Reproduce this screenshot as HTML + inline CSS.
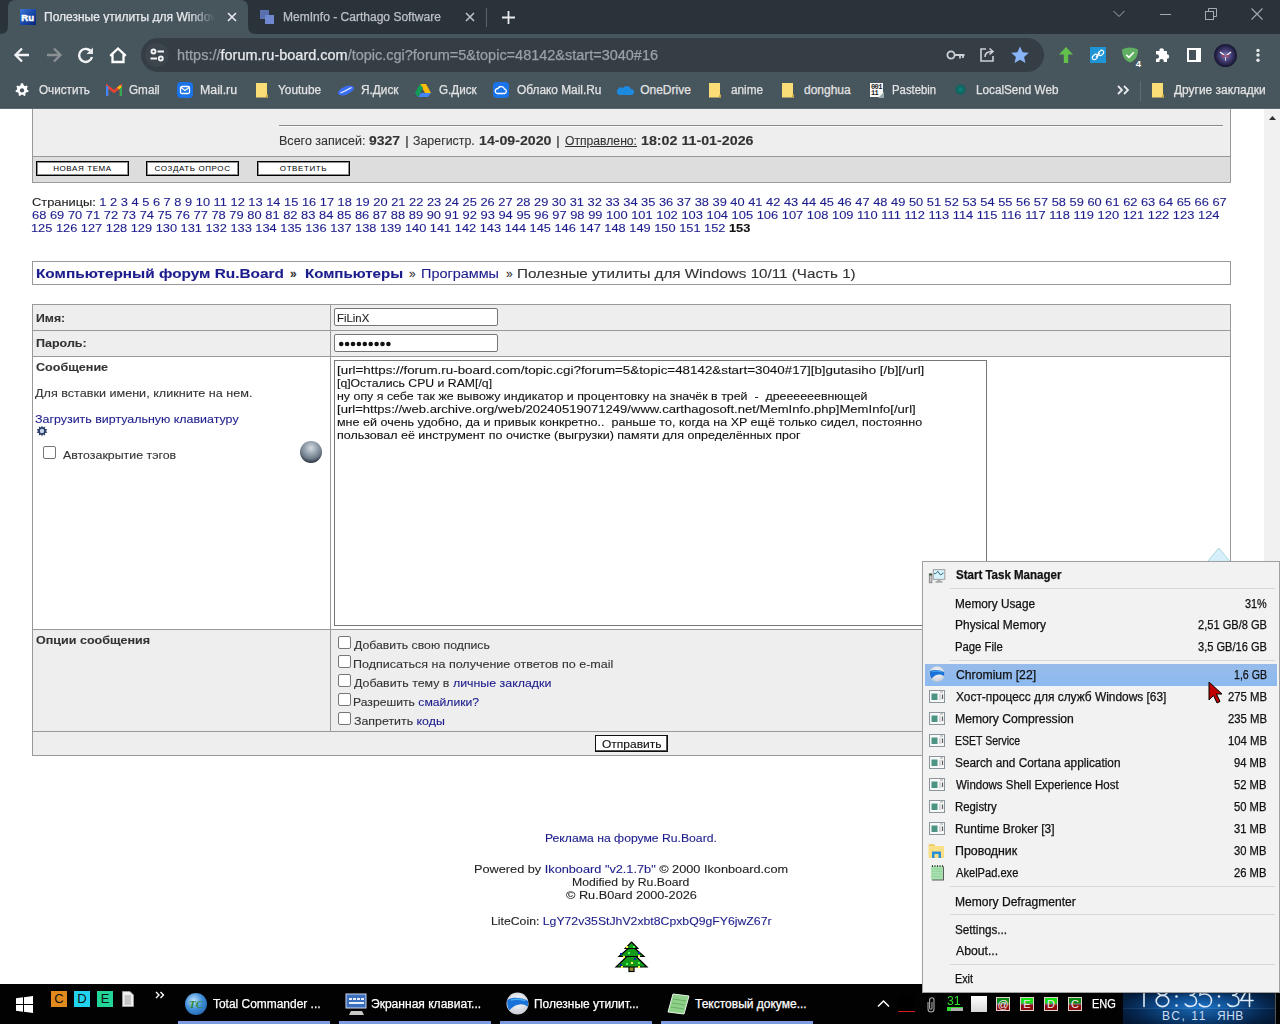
<!DOCTYPE html>
<html><head><meta charset="utf-8"><style>
*{margin:0;padding:0;box-sizing:content-box}
html,body{width:1280px;height:1024px;overflow:hidden;background:#fff;position:relative}
body{font-family:"Liberation Sans",sans-serif}
.abs{position:absolute}
.t{position:absolute;white-space:nowrap;line-height:1;transform-origin:0 0;font-family:"Liberation Sans",sans-serif}
.t a{color:#1c1c8c;text-decoration:none}
.t b{font-weight:bold}
.btn{position:absolute;top:161px;width:93px;height:15px;box-sizing:border-box;border:1px solid #000;box-shadow:inset 0 0 0 1px rgba(0,0,0,.45);background:#fff;font:8px/13px "Liberation Sans",sans-serif;letter-spacing:0.6px;text-align:center;color:#000}
.cb{position:absolute;width:11px;height:11px;border:1px solid #767676;border-radius:2px;background:#fff}
.qi{position:absolute;top:991px;width:16px;height:16px;font:13px/16px "Liberation Sans",sans-serif;text-align:center}
.tr{position:absolute;top:997px;width:14px;height:14px;background:linear-gradient(var(--g,#14e014) 0,var(--g,#14e014) 40%,#7a7a7a 50%,#8a0c0c 60%,#8a0c0c 100%);color:#f4eaea;font:11px/14px "Liberation Sans",sans-serif;text-align:center;outline:1px solid #e8d0d0;outline-offset:-1px}
.ct{-webkit-text-stroke:0.25px currentColor}
.pt{-webkit-text-stroke:0.1px currentColor}
.sep{position:absolute;left:950px;width:325px;height:1px;background:#d7d7d7}
</style></head><body>
<!-- ============ PAGE ============ -->
<div class="abs" style="left:0;top:108px;width:1280px;height:876px;background:#fff"></div>
<!-- scrollbar -->
<div class="abs" style="left:1264px;top:108px;width:16px;height:876px;background:#f1f1f1"></div>
<svg class="abs" style="left:1268px;top:115px" width="9" height="6"><path d="M1 5L4.5 1L8 5Z" fill="#303030"/></svg>
<!-- header table -->
<div class="abs" style="left:32px;top:100px;width:1197px;height:81px;border:1px solid #999;background:#eeeeee"></div>
<div class="abs" style="left:33px;top:156px;width:1197px;height:1px;background:#999"></div>
<div class="abs" style="left:33px;top:157px;width:1197px;height:25px;background:#dddddd"></div>
<div class="abs" style="left:279px;top:125px;width:944px;height:1px;background:#8a8a8a"></div>
<div class="abs" style="left:279px;top:126px;width:944px;height:1px;background:#fafafa"></div>
<div class="btn" style="left:36px">НОВАЯ ТЕМА</div>
<div class="btn" style="left:146px">СОЗДАТЬ ОПРОС</div>
<div class="btn" style="left:257px">ОТВЕТИТЬ</div>
<!-- breadcrumb box -->
<div class="abs" style="left:32px;top:261px;width:1197px;height:22px;border:1px solid #999;background:#fff"></div>
<!-- form table -->
<div class="abs" style="left:32px;top:304px;width:1197px;height:450px;border:1px solid #999;background:#eeeeee"></div>
<div class="abs" style="left:33px;top:330px;width:1197px;height:1px;background:#999"></div>
<div class="abs" style="left:33px;top:356px;width:1197px;height:1px;background:#999"></div>
<div class="abs" style="left:33px;top:357px;width:1197px;height:272px;background:#fff"></div>
<div class="abs" style="left:33px;top:629px;width:1197px;height:1px;background:#999"></div>
<div class="abs" style="left:33px;top:731px;width:1197px;height:1px;background:#999"></div>
<div class="abs" style="left:330px;top:305px;width:1px;height:426px;background:#999"></div>
<!-- inputs -->
<div class="abs" style="left:334px;top:308px;width:162px;height:16px;border:1px solid #767676;border-radius:2px;background:#fff"></div>
<div class="abs" style="left:334px;top:334px;width:162px;height:16px;border:1px solid #767676;border-radius:2px;background:#fff"></div>
<svg class="abs" style="left:338px;top:341px" width="56" height="6"><g fill="#111"><circle cx="3.2" cy="3" r="2.3"/><circle cx="9.1" cy="3" r="2.3"/><circle cx="15.0" cy="3" r="2.3"/><circle cx="20.9" cy="3" r="2.3"/><circle cx="26.8" cy="3" r="2.3"/><circle cx="32.7" cy="3" r="2.3"/><circle cx="38.6" cy="3" r="2.3"/><circle cx="44.5" cy="3" r="2.3"/><circle cx="50.4" cy="3" r="2.3"/></g></svg>
<!-- textarea -->
<div class="abs" style="left:334px;top:360px;width:651px;height:264px;border:1px solid #767676;background:#fff"></div>
<!-- gear + checkbox + knob -->
<svg class="abs" style="left:36px;top:425px" width="12" height="12"><path d="M6 0.5L7 2.5L9.2 1.5L9 3.9L11.4 4.2L10 6L11.4 7.8L9 8.1L9.2 10.5L7 9.5L6 11.5L5 9.5L2.8 10.5L3 8.1L0.6 7.8L2 6L0.6 4.2L3 3.9L2.8 1.5L5 2.5Z" fill="#2a3d66"/><circle cx="6" cy="6" r="2.2" fill="#c8d4ea"/></svg>
<div class="cb" style="left:43px;top:446px"></div>
<div class="abs" style="left:300px;top:441px;width:22px;height:22px;border-radius:50%;background:radial-gradient(circle at 50% 32%,#d4dae0 0,#9aa6b2 32%,#6e7b88 58%,#2e3a46 78%,#2e3a46 88%,#9aa2aa 100%)"></div>
<!-- option checkboxes -->
<div class="cb" style="left:338px;top:636px"></div>
<div class="cb" style="left:338px;top:655px"></div>
<div class="cb" style="left:338px;top:674px"></div>
<div class="cb" style="left:338px;top:693px"></div>
<div class="cb" style="left:338px;top:712px"></div>
<!-- submit button -->
<div class="abs" style="left:595px;top:735px;width:71px;height:15px;border:1px solid #111;background:#fff;box-shadow:inset -1px -1px 0 #555"></div>
<!-- tree -->
<svg class="abs" style="left:610px;top:938px" width="42" height="38" viewBox="610 938 42 38"><g stroke="#000" stroke-width="1.2" stroke-linejoin="miter">
<rect x="629" y="966" width="5" height="5.5" fill="#9a8a30"/>
<path d="M631.5 952L647 967H616Z" fill="#139a1a"/>
<path d="M631.5 945.5L644 956.5H619Z" fill="#139a1a"/>
<path d="M631.5 942L637.8 948.5H625.2Z" fill="#139a1a"/></g>
<g fill="#ffff50"><rect x="626" y="946" width="2" height="2"/><rect x="623" y="956" width="2" height="2"/><rect x="638" y="955" width="2" height="2"/><rect x="631" y="962" width="2" height="2"/><rect x="621" y="966" width="2" height="2"/><rect x="638" y="966" width="2" height="2"/></g>
<g fill="#1020b0"><rect x="620" y="953" width="2" height="2"/><rect x="638" y="952" width="2" height="2"/><rect x="634" y="958" width="2" height="2"/><rect x="620" y="964" width="2" height="2"/></g>
<g fill="#50ff50"><rect x="633" y="946" width="2" height="2"/><rect x="628" y="952" width="2" height="2"/><rect x="626" y="963" width="2" height="2"/><rect x="638" y="962" width="2" height="2"/></g>
</svg>
<div id="hdr0" class="t pt" style="left:278.96px;top:134.84px;font-size:12px;color:#333;transform:scaleX(1.0444);">Всего записей:</div>
<div id="hdr1" class="t pt" style="left:369.34px;top:134.84px;font-size:12px;color:#333;transform:scaleX(1.1654);"><b>9327</b></div>
<div id="hdr2" class="t pt" style="left:404.75px;top:134.84px;font-size:12px;color:#333;transform:scaleX(1.2500);">|</div>
<div id="hdr3" class="t pt" style="left:412.77px;top:134.84px;font-size:12px;color:#333;transform:scaleX(1.0322);">Зарегистр.</div>
<div id="hdr4" class="t pt" style="left:478.68px;top:134.84px;font-size:12px;color:#333;transform:scaleX(1.1803);"><b>14-09-2020</b></div>
<div id="hdr5" class="t pt" style="left:555.75px;top:134.84px;font-size:12px;color:#333;transform:scaleX(1.2500);">|</div>
<div id="hdr6" class="t pt" style="left:565.01px;top:134.84px;font-size:12px;color:#333;transform:scaleX(1.0125);"><u>Отправлено:</u></div>
<div id="hdr7" class="t pt" style="left:641.24px;top:134.84px;font-size:12px;color:#333;transform:scaleX(1.1872);"><b>18:02 11-01-2026</b></div>
<div id="pg1" class="t pt" style="left:32.00px;top:196.69px;font-size:11px;color:#222;transform:scaleX(1.1659);">Страницы: <a>1</a> <a>2</a> <a>3</a> <a>4</a> <a>5</a> <a>6</a> <a>7</a> <a>8</a> <a>9</a> <a>10</a> <a>11</a> <a>12</a> <a>13</a> <a>14</a> <a>15</a> <a>16</a> <a>17</a> <a>18</a> <a>19</a> <a>20</a> <a>21</a> <a>22</a> <a>23</a> <a>24</a> <a>25</a> <a>26</a> <a>27</a> <a>28</a> <a>29</a> <a>30</a> <a>31</a> <a>32</a> <a>33</a> <a>34</a> <a>35</a> <a>36</a> <a>37</a> <a>38</a> <a>39</a> <a>40</a> <a>41</a> <a>42</a> <a>43</a> <a>44</a> <a>45</a> <a>46</a> <a>47</a> <a>48</a> <a>49</a> <a>50</a> <a>51</a> <a>52</a> <a>53</a> <a>54</a> <a>55</a> <a>56</a> <a>57</a> <a>58</a> <a>59</a> <a>60</a> <a>61</a> <a>62</a> <a>63</a> <a>64</a> <a>65</a> <a>66</a> <a>67</a></div>
<div id="pg2" class="t pt" style="left:32.00px;top:209.69px;font-size:11px;color:#1c1c8c;transform:scaleX(1.1716);"><a>68</a> <a>69</a> <a>70</a> <a>71</a> <a>72</a> <a>73</a> <a>74</a> <a>75</a> <a>76</a> <a>77</a> <a>78</a> <a>79</a> <a>80</a> <a>81</a> <a>82</a> <a>83</a> <a>84</a> <a>85</a> <a>86</a> <a>87</a> <a>88</a> <a>89</a> <a>90</a> <a>91</a> <a>92</a> <a>93</a> <a>94</a> <a>95</a> <a>96</a> <a>97</a> <a>98</a> <a>99</a> <a>100</a> <a>101</a> <a>102</a> <a>103</a> <a>104</a> <a>105</a> <a>106</a> <a>107</a> <a>108</a> <a>109</a> <a>110</a> <a>111</a> <a>112</a> <a>113</a> <a>114</a> <a>115</a> <a>116</a> <a>117</a> <a>118</a> <a>119</a> <a>120</a> <a>121</a> <a>122</a> <a>123</a> <a>124</a></div>
<div id="pg3" class="t pt" style="left:30.84px;top:222.69px;font-size:11px;color:#1c1c8c;transform:scaleX(1.1637);"><a>125</a> <a>126</a> <a>127</a> <a>128</a> <a>129</a> <a>130</a> <a>131</a> <a>132</a> <a>133</a> <a>134</a> <a>135</a> <a>136</a> <a>137</a> <a>138</a> <a>139</a> <a>140</a> <a>141</a> <a>142</a> <a>143</a> <a>144</a> <a>145</a> <a>146</a> <a>147</a> <a>148</a> <a>149</a> <a>150</a> <a>151</a> <a>152</a> <b style="color:#111">153</b></div>
<div id="bc1" class="t pt" style="left:36.00px;top:267.84px;font-size:12px;color:#1c1c8c;transform:scaleX(1.2798);"><b>Компьютерный форум Ru.Board</b></div>
<div id="bc2" class="t pt" style="left:290.00px;top:267.84px;font-size:12px;color:#333;"><b>»</b></div>
<div id="bc3" class="t pt" style="left:305.00px;top:267.84px;font-size:12px;color:#1c1c8c;transform:scaleX(1.2564);"><b>Компьютеры</b></div>
<div id="bc4" class="t pt" style="left:409.00px;top:267.84px;font-size:12px;color:#333;">»</div>
<div id="bc5" class="t pt" style="left:420.80px;top:267.84px;font-size:12px;color:#1c1c8c;transform:scaleX(1.2031);">Программы</div>
<div id="bc6" class="t pt" style="left:506.00px;top:267.84px;font-size:12px;color:#333;">»</div>
<div id="bc7" class="t pt" style="left:516.73px;top:267.84px;font-size:12px;color:#333;transform:scaleX(1.2669);">Полезные утилиты для Windows 10/11 (Часть 1)</div>
<div id="l_name" class="t pt" style="left:36.00px;top:312.69px;font-size:11px;color:#333;transform:scaleX(1.1154);"><b>Имя:</b></div>
<div id="l_pass" class="t pt" style="left:36.00px;top:338.19px;font-size:11px;color:#333;transform:scaleX(1.1364);"><b>Пароль:</b></div>
<div id="l_msg" class="t pt" style="left:36.00px;top:361.69px;font-size:11px;color:#333;transform:scaleX(1.1429);"><b>Сообщение</b></div>
<div id="l_ins" class="t pt" style="left:35.00px;top:388.19px;font-size:11px;color:#333;transform:scaleX(1.1455);">Для вставки имени, кликните на нем.</div>
<div id="l_kb" class="t pt" style="left:35.00px;top:414.19px;font-size:11px;color:#1c1c8c;transform:scaleX(1.1298);">Загрузить виртуальную клавиатуру</div>
<div id="l_auto" class="t pt" style="left:63.00px;top:450.19px;font-size:11px;color:#333;transform:scaleX(1.1250);">Автозакрытие тэгов</div>
<div id="l_opt" class="t pt" style="left:36.00px;top:635.19px;font-size:11px;color:#333;transform:scaleX(1.1400);"><b>Опции сообщения</b></div>
<div id="in_name" class="t pt" style="left:336.97px;top:312.69px;font-size:11px;color:#222;transform:scaleX(1.0333);">FiLinX</div>
<div id="ta0" class="t pt" style="left:336.89px;top:364.69px;font-size:11px;color:#111;transform:scaleX(1.2143);">[url=https://forum.ru-board.com/topic.cgi?forum=5&amp;topic=48142&amp;start=3040#17][b]gutasiho [/b][/url]</div>
<div id="ta1" class="t pt" style="left:336.94px;top:377.69px;font-size:11px;color:#111;transform:scaleX(1.1123);">[q]Остались CPU и RAM[/q]</div>
<div id="ta2" class="t pt" style="left:336.94px;top:390.69px;font-size:11px;color:#111;transform:scaleX(1.1266);">ну опу я себе так же вывожу индикатор и процентовку на значёк в трей &nbsp;- &nbsp;дреееееевнющей</div>
<div id="ta3" class="t pt" style="left:336.91px;top:403.69px;font-size:11px;color:#111;transform:scaleX(1.1883);">[url=https://web.archive.org/web/20240519071249/www.carthagosoft.net/MemInfo.php]MemInfo[/url]</div>
<div id="ta4" class="t pt" style="left:336.93px;top:416.69px;font-size:11px;color:#111;transform:scaleX(1.1394);">мне ей очень удобно, да и привык конкретно.. &nbsp;раньше то, когда на XP ещё только сидел, постоянно</div>
<div id="ta5" class="t pt" style="left:336.93px;top:429.69px;font-size:11px;color:#111;transform:scaleX(1.1360);">пользовал её инструмент по очистке (выгрузки) памяти для определённых прог</div>
<div id="op0" class="t pt" style="left:354.00px;top:640.19px;font-size:11px;color:#333;transform:scaleX(1.1148);">Добавить свою подпись</div>
<div id="op1" class="t pt" style="left:352.86px;top:659.19px;font-size:11px;color:#333;transform:scaleX(1.1388);">Подписаться на получение ответов по e-mail</div>
<div id="op2" class="t pt" style="left:354.00px;top:678.19px;font-size:11px;color:#333;transform:scaleX(1.1257);">Добавить тему в <a>личные закладки</a></div>
<div id="op3" class="t pt" style="left:352.89px;top:697.19px;font-size:11px;color:#333;transform:scaleX(1.1062);">Разрешить <a>смайлики?</a></div>
<div id="op4" class="t pt" style="left:354.00px;top:716.19px;font-size:11px;color:#333;transform:scaleX(1.1250);">Запретить <a>коды</a></div>
<div id="submit" class="t pt" style="left:602.00px;top:738.69px;font-size:11px;color:#111;transform:scaleX(1.0926);">Отправить</div>
<div id="f1" class="t pt" style="left:544.89px;top:833.19px;font-size:11px;color:#1c1c8c;transform:scaleX(1.1071);"><a>Реклама на форуме Ru.Board.</a></div>
<div id="f2" class="t pt" style="left:473.92px;top:863.69px;font-size:11px;color:#222;transform:scaleX(1.1568);">Powered by <a>Ikonboard "v2.1.7b"</a> © 2000 Ikonboard.com</div>
<div id="f3" class="t pt" style="left:571.89px;top:876.69px;font-size:11px;color:#222;transform:scaleX(1.1095);">Modified by Ru.Board</div>
<div id="f4" class="t pt" style="left:566.00px;top:889.69px;font-size:11px;color:#222;transform:scaleX(1.1549);">© Ru.B0ard 2000-2026</div>
<div id="f5" class="t pt" style="left:490.89px;top:915.69px;font-size:11px;color:#222;transform:scaleX(1.1135);">LiteCoin: <a>LgY72v35StJhV2xbt8CpxbQ9gFY6jwZ67r</a></div><!-- ============ BROWSER CHROME ============ -->
<div class="abs" style="left:0;top:0;width:1280px;height:34px;background:#2a3339"></div>
<svg class="abs" style="left:0;top:0" width="260" height="34" viewBox="0 0 260 34">
  <path d="M0 34 Q8 34 8 26 L8 8 Q8 0 16 0 L240 0 Q248 0 248 8 L248 26 Q248 34 256 34 Z" fill="#47555d"/>
</svg>
<div class="abs" style="left:0;top:34px;width:1280px;height:74px;background:#47555d"></div>
<!-- tab1 favicon -->
<div class="abs" style="left:20px;top:9px;width:16px;height:16px;background:linear-gradient(135deg,#3a78d8 0,#1c4fb0 45%,#06237a 100%);"></div>
<svg class="abs" style="left:20px;top:9px" width="16" height="16"><text x="1.2" y="12.2" font-family="Liberation Sans" font-weight="bold" font-size="9.5" fill="#fff" stroke="#fff" stroke-width="0.5" letter-spacing="0.2">Ru</text></svg>
<svg class="abs" style="left:226px;top:11px" width="12" height="12"><path d="M2 2L10 10M10 2L2 10" stroke="#e8eaed" stroke-width="1.6"/></svg>
<!-- tab2 -->
<svg class="abs" style="left:259px;top:9px" width="16" height="16"><rect x="1" y="1" width="9" height="9" fill="#5a6fb0"/><rect x="6" y="6" width="9" height="9" fill="#7088d0"/></svg>
<svg class="abs" style="left:464px;top:11px" width="12" height="12"><path d="M2 2L10 10M10 2L2 10" stroke="#bdc1c6" stroke-width="1.6"/></svg>
<div class="abs" style="left:486px;top:8px;width:1px;height:19px;background:#5f6368"></div>
<svg class="abs" style="left:501px;top:10px" width="15" height="15"><path d="M7.5 1V14M1 7.5H14" stroke="#e8eaed" stroke-width="1.8"/></svg>
<!-- window controls -->
<svg class="abs" style="left:1113px;top:10px" width="12" height="8"><path d="M0.5 1L6 6.5L11.5 1" stroke="#a6abaf" stroke-width="1" fill="none"/></svg>
<div class="abs" style="left:1160px;top:14px;width:11px;height:1px;background:#a6abaf"></div>
<svg class="abs" style="left:1205px;top:8px" width="12" height="12"><path d="M3.5 3V0.5H11.5V8.5H9" stroke="#a6abaf" fill="none" stroke-width="1"/><rect x="0.5" y="3.5" width="8" height="8" stroke="#a6abaf" fill="none" stroke-width="1"/></svg>
<svg class="abs" style="left:1251px;top:8px" width="12" height="12"><path d="M0.5 0.5L11.5 11.5M11.5 0.5L0.5 11.5" stroke="#a6abaf" stroke-width="1.1"/></svg>
<!-- toolbar icons -->
<svg class="abs" style="left:13px;top:46px" width="18" height="18"><path d="M16 9H3M9 2.5L2.5 9L9 15.5" stroke="#f1f3f4" stroke-width="2.3" fill="none"/></svg>
<svg class="abs" style="left:45px;top:46px" width="18" height="18"><path d="M2 9H15M9 2.5L15.5 9L9 15.5" stroke="#8a9094" stroke-width="2.3" fill="none"/></svg>
<svg class="abs" style="left:77px;top:46px" width="18" height="18"><path d="M14.5 6.5A6.5 6.5 0 1 0 15 11" stroke="#f1f3f4" stroke-width="2.4" fill="none"/><path d="M16 1.5V8H9.5Z" fill="#e8eaed"/></svg>
<svg class="abs" style="left:109px;top:46px" width="18" height="18"><path d="M3.5 8.5V16H14.5V8.5M1.2 9.8L9 2.5L16.8 9.8" stroke="#fff" stroke-width="2.3" fill="none"/></svg>
<!-- omnibox -->
<div class="abs" style="left:141px;top:38px;width:903px;height:34px;border-radius:17px;background:#343e44"></div>
<div class="abs" style="left:145px;top:43px;width:24px;height:24px;border-radius:12px;background:#3b454b"></div>
<svg class="abs" style="left:149px;top:47px" width="16" height="16"><circle cx="4.5" cy="4.5" r="2" stroke="#f1f3f4" stroke-width="1.9" fill="none"/><path d="M8.5 4.5H15M1.5 11.5H8" stroke="#f1f3f4" stroke-width="1.9"/><circle cx="11.8" cy="11.5" r="2" stroke="#f1f3f4" stroke-width="1.9" fill="none"/></svg>
<svg class="abs" style="left:946px;top:48px" width="20" height="14"><circle cx="5" cy="7" r="3.6" stroke="#cdd1d5" stroke-width="1.8" fill="none"/><path d="M8.6 7H18.5M14 7V10.5M17 7V10" stroke="#cdd1d5" stroke-width="1.8"/></svg>
<svg class="abs" style="left:978px;top:46px" width="18" height="18"><path d="M8 3H3V15H15V10" stroke="#cdd1d5" stroke-width="1.6" fill="none"/><path d="M7 11C7 7 10 5.5 14 5.5M11.5 2.5L15 5.5L11.5 8.5" stroke="#cdd1d5" stroke-width="1.6" fill="none"/></svg>
<svg class="abs" style="left:1010px;top:45px" width="20" height="20"><path d="M10 1.5L12.6 7.3L18.8 7.8L14.1 11.9L15.5 18L10 14.8L4.5 18L5.9 11.9L1.2 7.8L7.4 7.3Z" fill="#8ab4f8"/></svg>
<!-- extensions -->
<svg class="abs" style="left:1058px;top:46px" width="16" height="18"><path d="M8 1L15 8.5H10.2V17H5.8V8.5H1Z" fill="#63c04a"/></svg>
<div class="abs" style="left:1090px;top:47px;width:16px;height:16px;background:#1e95d6"></div>
<svg class="abs" style="left:1090px;top:47px" width="16" height="16"><path d="M6 10L10 6" stroke="#fff" stroke-width="1.3"/><rect x="2" y="8" width="6" height="4" rx="2" transform="rotate(-45 5 10)" stroke="#fff" fill="none" stroke-width="1.2"/><rect x="8" y="4" width="6" height="4" rx="2" transform="rotate(-45 11 6)" stroke="#fff" fill="none" stroke-width="1.2"/></svg>
<svg class="abs" style="left:1122px;top:47px" width="22" height="21"><path d="M8 0.5C11 0.5 13.5 1.3 16 2.5C16 8 14.5 13 8 15.5C1.5 13 0 8 0 2.5C2.5 1.3 5 0.5 8 0.5Z" fill="#5fae62"/><path d="M4.2 7.8L7 10.3L11.8 5.2" stroke="#fff" stroke-width="1.6" fill="none"/><text x="16.5" y="19.5" font-family="Liberation Sans" font-size="9.5" font-weight="bold" fill="#fff" text-anchor="middle">4</text></svg>
<svg class="abs" style="left:1154px;top:47px" width="16" height="16"><path d="M2 4H5.5A2.2 2.2 0 1 1 9.8 4H13V7.3A2.2 2.2 0 1 1 13 11.7V15H9.6A2.2 2.2 0 1 0 5.6 15H2V11.5A2.2 2.2 0 1 0 2 7.5Z" fill="#fff"/></svg>
<svg class="abs" style="left:1185px;top:46px" width="18" height="18"><rect x="2" y="2" width="14" height="14" fill="#fff"/><rect x="4" y="4" width="7" height="10" fill="#455158"/></svg>
<div class="abs" style="left:1214px;top:44px;width:23px;height:23px;border-radius:50%;background:radial-gradient(circle at 50% 50%,#8a7fb8 0,#4b4680 30%,#1c1a3a 65%,#07070f 90%)"></div><svg class="abs" style="left:1214px;top:44px" width="23" height="23"><path d="M6 8L10 11M17 8L13 11" stroke="#f0f0f0" stroke-width="1.5"/><circle cx="9.5" cy="12" r="1" fill="#d03030"/><circle cx="13.5" cy="12" r="1" fill="#d03030"/><path d="M11.5 13V17" stroke="#ccc" stroke-width="1"/></svg>
<svg class="abs" style="left:1254px;top:46px" width="8" height="18"><circle cx="4" cy="4.4" r="1.7" fill="#e8eaed"/><circle cx="4" cy="9" r="1.7" fill="#e8eaed"/><circle cx="4" cy="14.2" r="1.7" fill="#e8eaed"/></svg>
<!-- bookmark icons -->
<svg class="abs" style="left:15px;top:83px" width="14" height="14" viewBox="0 0 16 16"><path d="M8 0.8L9.6 1.2L10 3.2L11.8 4.2L13.7 3.4L14.8 4.7L13.9 6.5L14.3 8.5L16 9.5L15.4 11.1L13.3 11.3L12 12.9L12.2 15L10.7 15.7L9.3 14.2H7.2L5.8 15.7L4.3 15L4.4 12.9L3.2 11.4L1 11.1L0.5 9.5L2.2 8.4L2.5 6.4L1.6 4.6L2.8 3.4L4.7 4.2L6.4 3.2L6.8 1.2Z" fill="#fff" transform="translate(0,-0.5) scale(0.98)"/><circle cx="8" cy="8.5" r="2.4" fill="#455158"/></svg>
<svg class="abs" style="left:106px;top:83px" width="16" height="14"><path d="M1 13V3L8 8.5L15 3V13" stroke="#ea4335" stroke-width="2.6" fill="none"/><path d="M1 13V3" stroke="#4285f4" stroke-width="2.6"/><path d="M15 13V3" stroke="#34a853" stroke-width="2.6"/><path d="M12 5.5L15 3" stroke="#fbbc04" stroke-width="2.6"/></svg>
<div class="abs" style="left:177px;top:82px;width:16px;height:16px;border-radius:4px;background:#1a73e8"></div>
<svg class="abs" style="left:177px;top:82px" width="16" height="16"><rect x="3.5" y="4.5" width="9" height="7" rx="1.5" stroke="#fff" stroke-width="1.3" fill="none"/><path d="M4 5.5L8 8.5L12 5.5" stroke="#fff" stroke-width="1.3" fill="none"/></svg>
<svg class="abs" style="left:255px;top:82px" width="14" height="17"><path d="M1 1H12V12.5L13 13V15.5H1Z" fill="#fbdd78"/><path d="M10.5 15.5L12 12L13 13.5V15.5Z" fill="#c9a23a"/></svg>
<svg class="abs" style="left:337px;top:83px" width="18" height="14"><ellipse cx="9" cy="7.5" rx="8.5" ry="4" transform="rotate(-22 9 7.5)" fill="#3a6ef0"/><path d="M3.5 10C7 8.5 11 6.5 14.5 4.5" stroke="#e8f0ff" stroke-width="1.3" fill="none"/></svg>
<svg class="abs" style="left:415px;top:83px" width="16" height="14"><path d="M5 1H11L16 10H10Z" fill="#fbbc04"/><path d="M5 1L0 10L3 14L8 5Z" fill="#0f9d58"/><path d="M3 14H13L16 10H6Z" fill="#4285f4"/></svg>
<div class="abs" style="left:493px;top:82px;width:16px;height:16px;border-radius:4px;background:#1a73e8"></div>
<svg class="abs" style="left:493px;top:82px" width="16" height="16"><path d="M4.5 11.5H11.5A2.3 2.3 0 0 0 11.5 7A3.5 3.5 0 0 0 5 6.5A2.5 2.5 0 0 0 4.5 11.5Z" stroke="#fff" stroke-width="1.3" fill="none"/></svg>
<svg class="abs" style="left:616px;top:84px" width="18" height="12"><path d="M3 11H15A3 3 0 0 0 15 5A4.5 4.5 0 0 0 7 4A3.5 3.5 0 0 0 3 11Z" fill="#1c8adf"/></svg>
<svg class="abs" style="left:708px;top:82px" width="14" height="17"><path d="M1 1H12V12.5L13 13V15.5H1Z" fill="#fbdd78"/><path d="M10.5 15.5L12 12L13 13.5V15.5Z" fill="#c9a23a"/></svg>
<svg class="abs" style="left:781px;top:82px" width="14" height="17"><path d="M1 1H12V12.5L13 13V15.5H1Z" fill="#fbdd78"/><path d="M10.5 15.5L12 12L13 13.5V15.5Z" fill="#c9a23a"/></svg>
<div class="abs" style="left:870px;top:83px;width:13px;height:14px;background:#fafafa"></div>
<div class="abs" style="left:871px;top:83.5px;font:bold 7px/6.5px 'Liberation Mono',monospace;color:#222;letter-spacing:-0.6px">001<br>11</div>
<svg class="abs" style="left:878px;top:92px" width="6" height="6"><path d="M0 6L6 0V6Z" fill="#9aa"/></svg>
<div class="abs" style="left:955px;top:84px;width:11px;height:11px;border-radius:50%;background:radial-gradient(circle,#11847a 0,#0d6662 45%,rgba(14,90,90,0) 100%)"></div>
<svg class="abs" style="left:1117px;top:85px" width="14" height="10"><path d="M1 1L5 5L1 9M7 1L11 5L7 9" stroke="#e8eaed" stroke-width="1.8" fill="none"/></svg>
<div class="abs" style="left:1140px;top:81px;width:1px;height:20px;background:#5f6b72"></div>
<svg class="abs" style="left:1151px;top:82px" width="14" height="17"><path d="M1 1H12V12.5L13 13V15.5H1Z" fill="#fbdd78"/><path d="M10.5 15.5L12 12L13 13.5V15.5Z" fill="#c9a23a"/></svg>
<div class="abs" style="left:0;top:107px;width:1280px;height:1px;background:#45525a"></div><div class="abs" style="left:0;top:108px;width:1280px;height:1px;background:#5d6a72"></div>
<div id="tab1" class="t ct" style="left:44.00px;top:11.34px;font-size:12px;color:#e8eaed;width:171px;overflow:hidden;-webkit-mask-image:linear-gradient(90deg,#000 85%,transparent);">Полезные утилиты для Windows 10/11 (Часть 1)</div>
<div id="tab2" class="t ct" style="left:283.00px;top:11.34px;font-size:12px;color:#bdc1c6;transform:scaleX(1.0032);">MemInfo - Carthago Software</div>
<div id="url" class="t ct" style="left:177.00px;top:47.65px;font-size:14px;color:#e8eaed;transform:scaleX(1.0344);"><span style="color:#9aa0a6">https://</span>forum.ru-board.com<span style="color:#9aa0a6">/topic.cgi?forum=5&amp;topic=48142&amp;start=3040#16</span></div>
<div id="bm0" class="t ct" style="left:38.59px;top:83.84px;font-size:12px;color:#e3e3e3;transform:scaleX(0.9750);">Очистить</div>
<div id="bm1" class="t ct" style="left:129.39px;top:83.84px;font-size:12px;color:#e3e3e3;transform:scaleX(0.9774);">Gmail</div>
<div id="bm2" class="t ct" style="left:199.97px;top:83.84px;font-size:12px;color:#e3e3e3;transform:scaleX(1.0286);">Mail.ru</div>
<div id="bm3" class="t ct" style="left:278.00px;top:83.84px;font-size:12px;color:#e3e3e3;transform:scaleX(0.9886);">Youtube</div>
<div id="bm4" class="t ct" style="left:361.20px;top:83.84px;font-size:12px;color:#e3e3e3;transform:scaleX(0.9842);">Я.Диск</div>
<div id="bm5" class="t ct" style="left:438.51px;top:83.84px;font-size:12px;color:#e3e3e3;transform:scaleX(0.9705);">G.Диск</div>
<div id="bm6" class="t ct" style="left:517.00px;top:83.84px;font-size:12px;color:#e3e3e3;transform:scaleX(0.9882);">Облако Mail.Ru</div>
<div id="bm7" class="t ct" style="left:640.19px;top:83.84px;font-size:12px;color:#e3e3e3;">OneDrive</div>
<div id="bm8" class="t ct" style="left:731.00px;top:83.84px;font-size:12px;color:#e3e3e3;transform:scaleX(0.9818);">anime</div>
<div id="bm9" class="t ct" style="left:804.00px;top:83.84px;font-size:12px;color:#e3e3e3;">donghua</div>
<div id="bm10" class="t ct" style="left:892.03px;top:83.84px;font-size:12px;color:#e3e3e3;transform:scaleX(0.9457);">Pastebin</div>
<div id="bm11" class="t ct" style="left:976.02px;top:83.84px;font-size:12px;color:#e3e3e3;transform:scaleX(0.9759);">LocalSend Web</div>
<div id="bm12" class="t ct" style="left:1173.79px;top:83.84px;font-size:12px;color:#e3e3e3;transform:scaleX(0.9957);">Другие закладки</div><!-- ============ TASKBAR ============ -->
<div class="abs" style="left:0;top:984px;width:1280px;height:40px;background:#020202"></div>
<svg class="abs" style="left:16px;top:996px" width="17" height="17"><path d="M0 2.3L7 1.3V8H0ZM8 1.2L17 0V8H8ZM0 9H7V15.7L0 14.7ZM8 9H17V17L8 15.8Z" fill="#fff"/></svg>
<div class="qi" style="left:51px;background:#e08a1e;color:#111">C</div>
<div class="qi" style="left:74px;background:#22d3f0;color:#111">D</div>
<div class="qi" style="left:97px;background:#22d69a;color:#111">E</div>
<svg class="abs" style="left:122px;top:991px" width="12" height="16"><path d="M0.5 0.5H8L11.5 4V15.5H0.5Z" fill="#f0f0f0" stroke="#999"/><path d="M2.5 5H9M2.5 7H9M2.5 9H9M2.5 11H9M2.5 13H9" stroke="#888" stroke-width="0.8"/></svg>
<svg class="abs" style="left:155px;top:991px" width="10" height="8"><path d="M1 1L4 4L1 7M5.5 1L8.5 4L5.5 7" stroke="#fff" stroke-width="1.4" fill="none"/></svg>
<!-- task buttons -->
<div class="abs" style="left:178px;top:1021px;width:152px;height:3px;background:#7d9be0"></div>
<div class="abs" style="left:339px;top:1021px;width:152px;height:3px;background:#7d9be0"></div>
<div class="abs" style="left:500px;top:1021px;width:152px;height:3px;background:#7d9be0"></div>
<div class="abs" style="left:661px;top:1021px;width:152px;height:3px;background:#7d9be0"></div>
<div class="abs" style="left:185px;top:993px;width:22px;height:22px;border-radius:50%;background:radial-gradient(circle at 40% 35%,#bfe3ff 0,#3f8fd8 45%,#1a4f9a 100%)"></div>
<div class="abs" style="left:189px;top:997px;font:italic bold 11px/14px 'Liberation Serif',serif;color:#2d8a3a">TC</div>
<svg class="abs" style="left:345px;top:992px" width="24" height="24"><rect x="1" y="2" width="20" height="14" fill="#3a6fc0" stroke="#cfd8e8"/><g fill="#e6eefc"><rect x="4" y="6" width="3" height="2"/><rect x="8" y="6" width="3" height="2"/><rect x="12" y="6" width="3" height="2"/><rect x="16" y="6" width="3" height="2"/><rect x="4" y="10" width="15" height="2"/></g><path d="M6 19H17L19 23H4Z" fill="#c8c8c8"/></svg>
<svg class="abs" style="left:506px;top:992px" width="23" height="23" viewBox="0 0 24 24"><defs><radialGradient id="cg506" cx="50%" cy="40%" r="60%"><stop offset="0" stop-color="#ffffff"/><stop offset="1" stop-color="#c8ccd6"/></radialGradient></defs><circle cx="12" cy="12" r="11.5" fill="url(#cg506)"/><path d="M1.5 8C6 5.5 16 5 23 9.5L22.8 15.5C17 10.5 9 13 3.5 19C1.5 16 0.8 11 1.5 8Z" fill="#1a72d8"/><path d="M5 8.5C10 7 15 7.5 20 9" stroke="#5cc8ff" stroke-width="1.5" fill="none" opacity=".7"/></svg>
<svg class="abs" style="left:667px;top:991px" width="24" height="25"><path d="M6 3L22 5L17 23L1 21Z" fill="#8fd08a" stroke="#e8f5e8"/><path d="M6 8L19 10M5 12L18 14M4 16L17 18" stroke="#5fa85a" stroke-width="0.8"/></svg>
<!-- tray -->
<svg class="abs" style="left:877px;top:999px" width="13" height="9"><path d="M1 7.5L6.5 2L12 7.5" stroke="#fff" stroke-width="1.5" fill="none"/></svg>
<div class="abs" style="left:898px;top:995px;width:17px;height:16px;background:#000"></div>
<div class="abs" style="left:898px;top:1011px;width:17px;height:1px;background:#d42020"></div>
<svg class="abs" style="left:925px;top:996px" width="12" height="17"><path d="M3 6V13A3 3 0 0 0 9 13V4A2.2 2.2 0 0 0 4.6 4V12A1.2 1.2 0 0 0 7 12V6" stroke="#aaa" stroke-width="1.1" fill="none"/></svg>
<div class="abs" style="left:947px;top:994px;font:13px/13px 'Liberation Sans',sans-serif;color:#2ee02e;transform:scaleX(0.95);transform-origin:0 0">31</div>
<div class="abs" style="left:947px;top:1007px;width:16px;height:1px;background:#2ee02e"></div>
<div class="abs" style="left:947px;top:1008px;width:16px;height:3px;background:linear-gradient(90deg,#2ee02e 0,#2ee02e 25%,#b0b0b0 25%)"></div>
<div class="abs" style="left:971px;top:996px;width:16px;height:16px;background:linear-gradient(#fff,#d8d8d8)"></div>
<div class="tr" style="left:996px;--g:#0b8a12">@</div>
<div class="tr" style="left:1020px">E</div>
<div class="tr" style="left:1044px">D</div>
<div class="tr" style="left:1068px;--g:#0b8a12">C</div>
<!-- clock -->
<div class="abs" style="left:1123px;top:984px;width:152px;height:40px;background:radial-gradient(ellipse 55% 60% at 50% 62%,#1f78cc 0,#0f4f92 45%,#072a55 80%,#051c3a 100%)"></div><div class="abs" style="left:1123px;top:1008px;width:152px;height:1px;background:rgba(120,180,240,.12)"></div><div class="abs" style="left:1123px;top:1009px;width:152px;height:15px;background:rgba(0,10,30,.18)"></div>
<div class="abs" style="left:1275px;top:984px;width:1px;height:40px;background:#555"></div>
<svg class="abs" style="left:1123px;top:984px" width="152" height="40" viewBox="1123 984 152 40"><g stroke="#dce9f7" stroke-width="1.6" fill="none" stroke-linecap="round">
<path d="M1141 988.5L1144 985.5V1006.5"/>
<ellipse cx="1162.5" cy="990.5" rx="5.3" ry="4.8"/><ellipse cx="1162.5" cy="1001" rx="6.3" ry="5.6"/>
<path d="M1185.5 988C1187 985.5 1195.5 985 1195.5 990.5C1195.5 994 1192 995.3 1189.5 995.3C1193 995.3 1196.5 997 1196.5 1001C1196.5 1007.5 1187.5 1007.5 1185.2 1004"/>
<path d="M1210.5 985.5H1201L1200 995C1202 994 1204 994 1205 994C1209 994 1211.5 997 1211.5 1000.5C1211.5 1004.5 1208.5 1006.8 1205 1006.8C1202.5 1006.8 1200.5 1006 1199.2 1004"/>
<path d="M1228 988C1229.5 985.5 1238 985 1238 990.5C1238 994 1234.5 995.3 1232 995.3C1235.5 995.3 1239 997 1239 1001C1239 1007.5 1230 1007.5 1227.7 1004"/>
<path d="M1249.5 1006.5V985.5L1240.8 1000.5H1253"/>
</g><g fill="#dce9f7"><circle cx="1176.5" cy="996.5" r="1.3"/><circle cx="1176.5" cy="1005.5" r="1.3"/><circle cx="1219" cy="996.5" r="1.3"/><circle cx="1219" cy="1005.5" r="1.3"/></g></svg>
<div class="abs" style="left:1162px;top:1010px;font:12px/12px 'Liberation Sans',sans-serif;color:#c9dcf2;letter-spacing:1.6px;white-space:nowrap">ВС, 11</div>
<div class="abs" style="left:1217px;top:1010px;font:12px/12px 'Liberation Sans',sans-serif;color:#c9dcf2;letter-spacing:0.5px;white-space:nowrap">ЯНВ</div>

<!-- ============ TRAY MENU ============ -->
<svg class="abs" style="left:1207px;top:547px" width="24" height="15"><path d="M0.5 14.5L11.8 1L23 14.5Z" fill="#d6f0fb" stroke="#9cc" stroke-width="0.8"/></svg>
<div class="abs" style="left:922px;top:561px;width:356px;height:430px;border:1px solid #a0a0a0;background:#f2f2f2;box-shadow:1px 1px 2px rgba(0,0,0,.2)"></div>
<div class="sep" style="top:588px"></div>
<div class="sep" style="top:660px"></div>
<div class="abs" style="left:925px;top:664px;width:352px;height:22px;background:linear-gradient(#97bbea,#8cbaf0)"></div>
<div class="sep" style="top:886px"></div>
<div class="sep" style="top:914px"></div>
<div class="sep" style="top:964px"></div>
<!-- menu icons -->
<svg class="abs" style="left:928px;top:568px" width="18" height="16"><rect x="5.3" y="1.6" width="11.5" height="9.8" fill="#d6f2fb" stroke="#a4a4a4" stroke-width="1.1"/><path d="M6 5.6H7.8L9.8 3.4L12.5 7L15.5 5" stroke="#35667a" stroke-width="1" fill="none"/><path d="M9.5 11.5H12.5V13H14.5V14.8H7.5V13H9.5Z" fill="#a8a8a8"/><rect x="1.3" y="5.8" width="2.6" height="9" fill="#c8c8c8" stroke="#7a7a7a" stroke-width="0.8"/><rect x="1.3" y="5.8" width="2.6" height="1.6" fill="#304a30"/></svg>
<svg class="abs" style="left:929px;top:666px" width="16" height="16" viewBox="0 0 24 24"><defs><radialGradient id="cg929" cx="50%" cy="40%" r="60%"><stop offset="0" stop-color="#ffffff"/><stop offset="1" stop-color="#c8ccd6"/></radialGradient></defs><circle cx="12" cy="12" r="11.5" fill="url(#cg929)"/><path d="M1.5 8C6 5.5 16 5 23 9.5L22.8 15.5C17 10.5 9 13 3.5 19C1.5 16 0.8 11 1.5 8Z" fill="#1a72d8"/><path d="M5 8.5C10 7 15 7.5 20 9" stroke="#5cc8ff" stroke-width="1.5" fill="none" opacity=".7"/></svg>
<svg class="abs" style="left:0;top:0" width="0" height="0"><defs><g id="appico"><rect x="0.5" y="0.5" width="15" height="12" fill="#f8f8f8" stroke="#8a969c"/><path d="M11 2H14" stroke="#777" stroke-width="0.7"/><rect x="2.5" y="3.5" width="6" height="6.5" fill="#4c9484"/><path d="M10 5H12.5M10 7H12.5M10 9H12.5" stroke="#8a8a8a" stroke-width="0.6"/><path d="M13.6 4.5V9" stroke="#222" stroke-width="0.8"/></g></defs></svg>
<svg class="abs" style="left:929px;top:690px" width="16" height="14"><use href="#appico"/></svg>
<svg class="abs" style="left:929px;top:712px" width="16" height="14"><use href="#appico"/></svg>
<svg class="abs" style="left:929px;top:734px" width="16" height="14"><use href="#appico"/></svg>
<svg class="abs" style="left:929px;top:756px" width="16" height="14"><use href="#appico"/></svg>
<svg class="abs" style="left:929px;top:778px" width="16" height="14"><use href="#appico"/></svg>
<svg class="abs" style="left:929px;top:800px" width="16" height="14"><use href="#appico"/></svg>
<svg class="abs" style="left:929px;top:822px" width="16" height="14"><use href="#appico"/></svg>
<svg class="abs" style="left:928px;top:843px" width="17" height="16"><path d="M0.5 1.5H6L7.5 3H16V15H0.5Z" fill="#fbdf86"/><path d="M1 1.5H6L7 2.5H1Z" fill="#e6b840"/><path d="M4 15V8.5H13V15H10.5V11H6.5V15Z" fill="#2a8fd6"/></svg>
<svg class="abs" style="left:930px;top:865px" width="16" height="16"><rect x="2" y="1.5" width="12" height="14" fill="#5a5a5a"/><rect x="1" y="1" width="12" height="13.5" fill="#a9e0b0"/><path d="M2 4H12M2 6.5H12M2 9H12M2 11.5H12" stroke="#8fcf98" stroke-width="0.8"/><path d="M2 1H3M4.5 1H5.5M7 1H8M9.5 1H10.5M12 1H13" stroke="#111" stroke-width="1.5"/></svg>
<!-- cursor -->
<svg class="abs" style="left:1207.5px;top:680.5px" width="14" height="24"><path d="M1 1V19L5.5 14.5L9 22L12 20.5L8.5 13H14Z" fill="#c00000" stroke="#000" stroke-width="1"/></svg>
<div id="mi0" class="t ct" style="left:955.58px;top:568.94px;font-size:12px;color:#111;transform:scaleX(0.9595);"><b>Start Task Manager</b></div>
<div id="mi1" class="t ct" style="left:954.61px;top:597.54px;font-size:12px;color:#111;transform:scaleX(0.9840);">Memory Usage</div>
<div id="mi2" class="t ct" style="left:954.60px;top:619.39px;font-size:12px;color:#111;transform:scaleX(0.9967);">Physical Memory</div>
<div id="mi3" class="t ct" style="left:954.64px;top:641.24px;font-size:12px;color:#111;transform:scaleX(0.9420);">Page File</div>
<div id="mi4" class="t ct" style="left:955.60px;top:668.94px;font-size:12px;color:#111;transform:scaleX(1.0177);">Chromium [22]</div>
<div id="mi5" class="t ct" style="left:955.59px;top:690.94px;font-size:12px;color:#111;transform:scaleX(0.9925);">Хост-процесс для служб Windows [63]</div>
<div id="mi6" class="t ct" style="left:954.59px;top:712.94px;font-size:12px;color:#111;transform:scaleX(1.0129);">Memory Compression</div>
<div id="mi7" class="t ct" style="left:954.69px;top:734.94px;font-size:12px;color:#111;transform:scaleX(0.8743);">ESET Service</div>
<div id="mi8" class="t ct" style="left:954.61px;top:756.94px;font-size:12px;color:#111;transform:scaleX(0.9844);">Search and Cortana application</div>
<div id="mi9" class="t ct" style="left:955.58px;top:778.94px;font-size:12px;color:#111;transform:scaleX(0.9561);">Windows Shell Experience Host</div>
<div id="mi10" class="t ct" style="left:954.63px;top:800.94px;font-size:12px;color:#111;transform:scaleX(0.9477);">Registry</div>
<div id="mi11" class="t ct" style="left:954.60px;top:822.94px;font-size:12px;color:#111;transform:scaleX(0.9949);">Runtime Broker [3]</div>
<div id="mi12" class="t ct" style="left:954.57px;top:844.94px;font-size:12px;color:#111;transform:scaleX(1.0333);">Проводник</div>
<div id="mi13" class="t ct" style="left:955.57px;top:866.94px;font-size:12px;color:#111;transform:scaleX(0.9250);">AkelPad.exe</div>
<div id="mi14" class="t ct" style="left:954.59px;top:895.64px;font-size:12px;color:#111;transform:scaleX(1.0058);">Memory Defragmenter</div>
<div id="mi15" class="t ct" style="left:954.61px;top:923.64px;font-size:12px;color:#111;transform:scaleX(0.9750);">Settings...</div>
<div id="mi16" class="t ct" style="left:955.60px;top:945.34px;font-size:12px;color:#111;transform:scaleX(1.0171);">About...</div>
<div id="mi17" class="t ct" style="left:954.67px;top:972.94px;font-size:12px;color:#111;transform:scaleX(0.9000);">Exit</div>
<div id="mv0" class="t ct" style="left:1245.00px;top:597.54px;font-size:12px;color:#111;transform:scaleX(0.9042);">31%</div>
<div id="mv1" class="t ct" style="left:1197.84px;top:619.39px;font-size:12px;color:#111;transform:scaleX(0.9230);">2,51 GB/8 GB</div>
<div id="mv2" class="t ct" style="left:1197.84px;top:641.24px;font-size:12px;color:#111;transform:scaleX(0.9230);">3,5 GB/16 GB</div>
<div id="mv3" class="t ct" style="left:1234.00px;top:668.94px;font-size:12px;color:#111;transform:scaleX(0.8838);">1,6 GB</div>
<div id="mv4" class="t ct" style="left:1228.00px;top:690.94px;font-size:12px;color:#111;transform:scaleX(0.9439);">275 MB</div>
<div id="mv5" class="t ct" style="left:1228.00px;top:712.94px;font-size:12px;color:#111;transform:scaleX(0.9439);">235 MB</div>
<div id="mv6" class="t ct" style="left:1228.00px;top:734.94px;font-size:12px;color:#111;transform:scaleX(0.9439);">104 MB</div>
<div id="mv7" class="t ct" style="left:1234.00px;top:756.94px;font-size:12px;color:#111;transform:scaleX(0.9343);">94 MB</div>
<div id="mv8" class="t ct" style="left:1234.00px;top:778.94px;font-size:12px;color:#111;transform:scaleX(0.9343);">52 MB</div>
<div id="mv9" class="t ct" style="left:1234.00px;top:800.94px;font-size:12px;color:#111;transform:scaleX(0.9343);">50 MB</div>
<div id="mv10" class="t ct" style="left:1234.00px;top:822.94px;font-size:12px;color:#111;transform:scaleX(0.9343);">31 MB</div>
<div id="mv11" class="t ct" style="left:1234.00px;top:844.94px;font-size:12px;color:#111;transform:scaleX(0.9343);">30 MB</div>
<div id="mv12" class="t ct" style="left:1234.00px;top:866.94px;font-size:12px;color:#111;transform:scaleX(0.9343);">26 MB</div>
<div id="tb0" class="t ct" style="left:213.00px;top:997.84px;font-size:12px;color:#ffffff;transform:scaleX(0.9954);">Total Commander ...</div>
<div id="tb1" class="t ct" style="left:371.00px;top:997.84px;font-size:12px;color:#ffffff;transform:scaleX(1.0037);">Экранная клавиат...</div>
<div id="tb2" class="t ct" style="left:534.00px;top:997.84px;font-size:12px;color:#ffffff;transform:scaleX(0.9962);">Полезные утилит...</div>
<div id="tb3" class="t ct" style="left:695.00px;top:997.84px;font-size:12px;color:#ffffff;">Текстовый докуме...</div>
<div id="eng" class="t ct" style="left:1092.08px;top:997.84px;font-size:12px;color:#ffffff;transform:scaleX(0.9200);">ENG</div>
</body></html>
